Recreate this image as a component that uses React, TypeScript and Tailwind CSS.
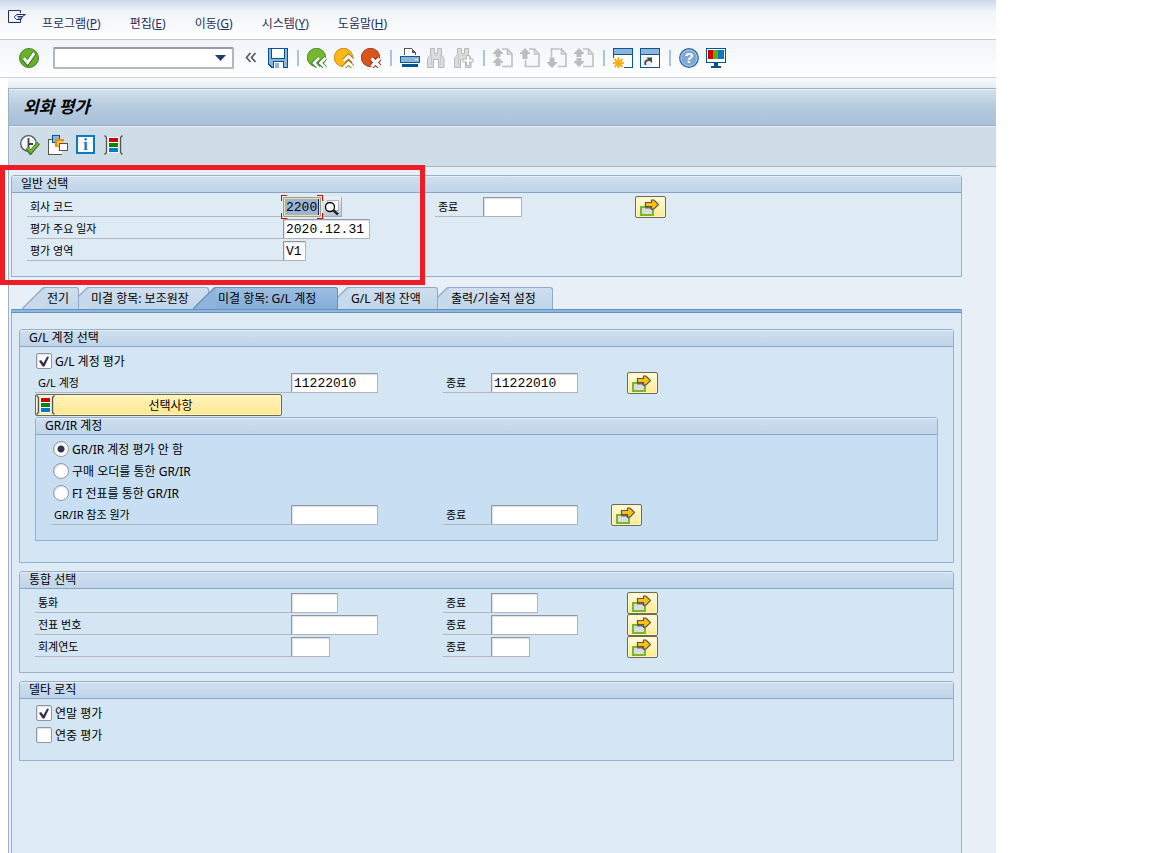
import React, { useState } from 'react';

const MENUS = [
  { label: '프로그램', hotkey: 'P' },
  { label: '편집', hotkey: 'E' },
  { label: '이동', hotkey: 'G' },
  { label: '시스템', hotkey: 'Y' },
  { label: '도움말', hotkey: 'H' },
];

const TABS = [
  { id: 'posting', label: '전기', shape: 'z-[5] w-[57px]' },
  { id: 'subledger', label: '미결 항목: 보조원장', shape: 'z-[4] -ml-[13px] w-[143px]' },
  { id: 'gl', label: '미결 항목: G/L 계정', shape: 'z-[6] -ml-[16px] w-[145px]' },
  { id: 'balance', label: 'G/L 계정 잔액', shape: 'z-[3] -ml-[12px] w-[112px]' },
  { id: 'output', label: '출력/기술적 설정', shape: 'z-[2] -ml-[12px] w-[127px]' },
];

interface IconProps {
  children: React.ReactNode;
  crisp?: boolean;
}

const Icon: React.FC<IconProps> = ({ children, crisp }) => (
  <svg
    viewBox="0 0 20 20"
    className="block h-5 w-5"
    fill="none"
    shapeRendering={crisp ? 'crispEdges' : undefined}
    aria-hidden="true"
  >
    {children}
  </svg>
);

const EnterIcon = () => (
  <Icon>
    <circle cx="10" cy="10" r="9.5" fill="#6ab023" stroke="#3f7f3a" />
    <path d="M4.5 10.5l4 4.5 7-10" stroke="#2f6f2a" strokeWidth="4.6" />
    <path d="M4.8 10.2l3.8 4.3 6.6-9.3" stroke="#fff" strokeWidth="3" />
  </Icon>
);

const SaveIcon = () => (
  <Icon crisp>
    <path d="M0 0h20v20H3l-3-3z" fill="#00558c" />
    <path d="M1 1h18v18H4l-3-3z" fill="#8fb4dc" />
    <path d="M3 0h14v11H3z" fill="#00558c" />
    <path d="M4 1h12v9H4z" fill="#fff" />
    <path d="M5 13h11v7H5z" fill="#00558c" />
    <path d="M6 14h9v6H6z" fill="#fff" />
    <path d="M7 15h4v5H7z" fill="#8fb4dc" />
  </Icon>
);

const BackIcon = () => (
  <Icon>
    <circle cx="9.5" cy="9.5" r="9.2" fill="#76b82a" stroke="#4a8b3c" />
    <path d="M12 10l-5 5 5 5M18.5 10l-5 5 5 5" stroke="#3c7f35" strokeWidth="4.4" />
    <path d="M12 10l-5 5 5 5M18.5 10l-5 5 5 5" stroke="#fff" strokeWidth="2.6" />
  </Icon>
);

const ExitIcon = () => (
  <Icon>
    <circle cx="9.5" cy="9.5" r="9.2" fill="#fdb913" stroke="#c98b20" />
    <path d="M9.5 13l5-4.5 5 4.5M9.5 19.5l5-4.5 5 4.5" stroke="#a87a2c" strokeWidth="4.8" />
    <path d="M9.5 13l5-4.5 5 4.5M9.5 19.5l5-4.5 5 4.5" stroke="#fff" strokeWidth="2.8" />
  </Icon>
);

const CancelIcon = () => (
  <Icon>
    <circle cx="9.5" cy="9.5" r="9.2" fill="#d9541a" stroke="#a83c1c" />
    <path d="M10.5 10.5l8 8M18.5 10.5l-8 8" stroke="#a02c16" strokeWidth="5.4" />
    <path d="M10.5 10.5l8 8M18.5 10.5l-8 8" stroke="#fff" strokeWidth="3.2" />
  </Icon>
);

const PrintIcon = () => (
  <Icon crisp>
    <path d="M4 7V1h9l3 3v3z" fill="#fff" />
    <path d="M4.5 7V.5H12M15.5 4v3M12 .5v3.5h4" stroke="#555" />
    <path d="M12 1h1v1h1v1h1v1h-3z" fill="#555" />
    <rect x="0" y="8" width="20" height="7" rx="1" fill="#0a5a8f" />
    <rect x="1" y="9" width="18" height="5" fill="#8fb4dc" />
    <rect x="15" y="11" width="3" height="1" fill="#fff" />
    <rect x="2" y="16" width="16" height="3" fill="#00558c" />
  </Icon>
);

const Binoculars = () => (
  <>
    <path
      d="M3.5 .5h4v5h3v-5h4v6l2.5 4v9h-5.5v-8h-5v8H.5v-9l3-4z"
      fill="#dcdcdc"
      stroke="#b8b8b8"
    />
    <path d="M4.5 6v11M13.5 6v11M7.5 7.5h3" stroke="#c8c8c8" />
  </>
);

const FindIcon = () => (
  <Icon>
    <Binoculars />
  </Icon>
);

const FindNextIcon = () => (
  <Icon>
    <Binoculars />
    <path d="M12.5 7.5h3V11H19v3h-3.5v3.5h-3V14H9v-3h3.5z" fill="#fafafa" stroke="#b8b8b8" />
  </Icon>
);

// arrow glyph over a dog-eared page, used by the four paging buttons
const PageIcon: React.FC<{ arrow: string; page: string }> = ({ arrow, page }) => (
  <Icon>
    <path d={page} fill="#f7f8fa" stroke="#c0c0c0" strokeWidth="1.6" />
    <path d="M14.5 1v5H19" stroke="#c0c0c0" strokeWidth="1.6" />
    <path d={arrow} fill="#bcbcbc" />
  </Icon>
);

const FirstPageIcon = () => (
  <PageIcon
    page="M9 1h5.5L19 6v12.5H9"
    arrow="M5 0l5 5v1H7.5v3h-5V6H0V5zM5 9l5 5v1H7.5v3h-5v-3H0v-1z"
  />
);

const PrevPageIcon = () => (
  <PageIcon page="M9 1h5.5L19 6v12.5H5.5V12" arrow="M5 0l5 5v1H7.5v5h-5V6H0V5z" />
);

const NextPageIcon = () => (
  <PageIcon page="M4.5 9V1h10L19 6v12.5h-8" arrow="M2.5 9.5h5V14H10v1l-5 5-5-5v-1h2.5z" />
);

const LastPageIcon = () => (
  <PageIcon
    page="M9 1h5.5L19 6v12.5H9"
    arrow="M5 0l5 5v1H7.5v3h-5V6H0V5zM2.5 10h5v3H10v1l-5 5-5-5v-1h2.5z"
  />
);

const WindowFrame = () => (
  <>
    <path d="M0 0h20v20H0z" fill="#0a5a8f" />
    <path d="M1 1h18v5H1z" fill="#8fb4dc" />
    <path d="M1 7h18v12H1z" fill="#fff" />
  </>
);

const NewSessionIcon = () => (
  <Icon>
    <WindowFrame />
    <path d="M0 10h11v10H0z" fill="#fff" />
    <path d="M5.5 9.5v11M0 15h11M1.5 11l8 8M9.5 11l-8 8" stroke="#f59c00" strokeWidth="1.6" />
    <circle cx="5.5" cy="15" r="3.5" fill="#fdb100" />
  </Icon>
);

const ShortcutIcon = () => (
  <Icon>
    <WindowFrame />
    <path d="M3 9h9v9H3z" fill="#ececec" />
    <path d="M5.5 17c-1-3 0-5 4-5" stroke="#444" strokeWidth="1.8" />
    <path d="M6.5 9.5H12V15z" fill="#444" />
  </Icon>
);

const HelpIcon = () => (
  <Icon>
    <circle cx="10" cy="10" r="9.3" fill="#7fa8d6" stroke="#2e6f9f" strokeWidth="1.3" />
    <circle cx="10" cy="10" r="8" stroke="#a9c6e6" />
    <text x="10" y="15" textAnchor="middle" fontFamily="Liberation Sans" fontSize="15" fontWeight="700" fill="#fff">
      ?
    </text>
  </Icon>
);

const LayoutIcon = () => (
  <Icon crisp>
    <path d="M0 0h20v15H0z" fill="#00558c" />
    <path d="M1 1h18v13H1z" fill="#fff" />
    <path d="M2 2h6v9H2z" fill="#d00000" />
    <path d="M7 2h6v9H7z" fill="#5fae00" />
    <path d="M12 2h6v9h-6z" fill="#0a78c8" />
    <path d="M8 15h4v3H8zM5 18h10v2H5z" fill="#00558c" />
  </Icon>
);

const ExecuteIcon = () => (
  <Icon>
    <circle cx="8.5" cy="8.5" r="7.8" fill="#f4f7f9" stroke="#555" strokeWidth="1.3" />
    <path d="M8.5 3v6H13M8.5 9v4" stroke="#444" strokeWidth="1.8" />
    <path d="M7 13l3.5 4.5L18.5 8" stroke="#3a6f2a" strokeWidth="4" />
    <path d="M7.5 13l3.2 3.8L18 8.5" stroke="#77b82a" strokeWidth="2.2" />
  </Icon>
);

const VariantIcon = () => (
  <Icon crisp>
    <path d="M0 4h14v16H0z" fill="#555" />
    <path d="M1 5h13v14H1z" fill="#fff" />
    <path d="M4 0h8v8H4z" fill="#0a5a8f" />
    <path d="M5 1h6v6H5z" fill="#8fb4dc" />
    <path d="M7 4h9v8H7z" fill="#f08c00" />
    <path d="M9 6h7v5H9z" fill="#fdc648" />
    <path d="M11 8h9v8h-9z" fill="#555" />
    <path d="M12 9h7v6h-7z" fill="#fff" />
  </Icon>
);

const InfoIcon = () => (
  <Icon crisp>
    <path d="M0 0h19v19H0z" fill="#0a7ac2" />
    <path d="M2 2h15v15H2z" fill="#fff" />
    <text x="9.5" y="15" textAnchor="middle" fontFamily="Liberation Serif" fontSize="16" fontWeight="700" fill="#0a7ac2">
      i
    </text>
  </Icon>
);

const SelectionIcon = () => (
  <Icon>
    <path d="M3 2h13v16H3z" fill="#f6f8fa" />
    <path d="M.5 .5l2 2v15l-2 2M18.5 .5l-2 2v15l2 2" stroke="#555" strokeWidth="1.4" />
    <path d="M5 3h9v4H5z" fill="#d00000" />
    <path d="M5 8h9v4H5z" fill="#008a00" />
    <path d="M5 13h9v4H5z" fill="#0a78c8" />
  </Icon>
);

const EXECUTION_TOOLS = [
  { label: '실행', icon: <ExecuteIcon /> },
  { label: '변형 가져오기', icon: <VariantIcon /> },
  { label: '정보', icon: <InfoIcon /> },
  { label: '동적 선택', icon: <SelectionIcon /> },
];

const ToolButton: React.FC<{ label: string; icon: React.ReactNode; disabled?: boolean }> = ({
  label,
  icon,
  disabled,
}) => (
  <button type="button" aria-label={label} disabled={disabled} className="h-5 w-5 shrink-0">
    {icon}
  </button>
);

const Separator = () => (
  <span className="flex h-5 w-[5px] shrink-0 justify-center">
    <span className="h-4 w-[2px] self-center bg-[#a9c3dd]" />
  </span>
);

const Group: React.FC<{ title: string; className: string; children: React.ReactNode }> = ({
  title,
  className,
  children,
}) => (
  <section className={`rounded-t-[3px] border border-[#93b1cf] ${className}`}>
    <h2 className="h-[17px] rounded-t-[2px] border-b border-[#8aa6c6] bg-linear-to-b from-[#cfdfee] to-[#bfd5ea] pl-[9px] text-xs leading-[15px] shadow-[inset_0_1px_0_#e3eef8]">
      {title}
    </h2>
    <div className="px-[15px] pt-[3px]">{children}</div>
  </section>
);

const FIELD =
  'h-5 rounded-[1px] border border-[#b0b4ba] border-t-[#92979e] border-l-[#92979e] bg-white px-[2px] font-["Liberation_Mono","Noto_Sans_CJK_KR",monospace] text-[13px] leading-[18px] shadow-[inset_1px_1px_1px_#dcdfe6] outline-none';

const MultiSelectButton: React.FC<{ label: string }> = ({ label }) => (
  <button
    type="button"
    aria-label={`${label} 다중 선택`}
    className="h-[22px] w-[31px] rounded-[2px] border border-[#6d6a58] bg-linear-to-b from-[#fffbe0] to-[#ffe98c] shadow-[inset_0_0_0_1px_#fff6c4]"
  >
    <svg viewBox="0 0 29 20" className="block h-5 w-[29px]" fill="none" aria-hidden="true">
      <rect x="5" y="10" width="12" height="8" fill="#dcdcdc" stroke="#76b82a" strokeWidth="2" />
      <path d="M9 9h8v5l-3-2.5H9z" fill="#6a6a6a" />
      <path d="M9.5 5.5h6V3H18l4.5 4.5L18 12h-2.5V9.500h-6z" fill="#fdc010" stroke="#555" strokeWidth="1.2" />
    </svg>
  </button>
);

interface RangeRowProps {
  label: string;
  id: string;
  columns: string;
  fieldWidth: string;
  value?: string;
  field?: React.ReactNode;
}

const RangeRow: React.FC<RangeRowProps> = ({ label, id, columns, fieldWidth, value, field }) => (
  <div className={`grid h-[22px] items-center ${columns}`}>
    <label htmlFor={id} className="h-5 border-b border-[#b4b8bc] pl-[3px] text-[11px] leading-5">
      {label}
    </label>
    <div className="flex">
      {field ?? <input id={id} defaultValue={value} className={`${FIELD} ${fieldWidth}`} />}
    </div>
    <label htmlFor={`${id}-to`} className="h-5 border-b border-[#b4b8bc] pl-[3px] text-[11px] leading-5">
      종료
    </label>
    <div className="flex">
      <input id={`${id}-to`} defaultValue={value} className={`${FIELD} ${fieldWidth}`} />
    </div>
    <MultiSelectButton label={label} />
  </div>
);

const SingleRow: React.FC<{ label: string; id: string; value: string; fieldWidth: string }> = ({
  label,
  id,
  value,
  fieldWidth,
}) => (
  <div className="flex h-[22px] items-center">
    <label htmlFor={id} className="h-5 w-64 border-b border-[#b4b8bc] pl-[3px] text-[11px] leading-5">
      {label}
    </label>
    <input id={id} defaultValue={value} className={`${FIELD} ${fieldWidth}`} />
  </div>
);

const CheckRow: React.FC<{ label: string; checked?: boolean }> = ({ label, checked }) => (
  <label className="flex h-[22px] w-fit items-center gap-[3px] pl-px text-xs leading-5">
    <span className="relative h-4 w-4">
      <input
        type="checkbox"
        defaultChecked={checked}
        className="peer block h-4 w-4 appearance-none rounded-[2px] border border-[#92979e] bg-white shadow-[inset_1px_1px_1px_#dcdfe6]"
      />
      <svg
        viewBox="0 0 16 16"
        className="pointer-events-none absolute inset-0 hidden h-4 w-4 peer-checked:block"
        aria-hidden="true"
      >
        <path d="M3 8l2-1 2.5 3L11 3.5l2 .5-4.5 9.5h-2z" fill="#32325a" />
      </svg>
    </span>
    <span className="pt-[2px]">{label}</span>
  </label>
);

const RadioRow: React.FC<{ label: string; checked?: boolean }> = ({ label, checked }) => (
  <label className="flex h-[22px] w-fit items-center gap-[3px] pl-[2px] text-xs leading-5">
    <input
      type="radio"
      name="grir"
      defaultChecked={checked}
      className="h-4 w-4 appearance-none rounded-full border border-[#92979e] bg-white shadow-[inset_1px_1px_1px_#dcdfe6] checked:bg-[radial-gradient(circle,#32324f_3px,#ffffff_4px)]"
    />
    <span className="pt-[2px]">{label}</span>
  </label>
);

// focused field: selected text, red corner marks and the F4 search button
const CompanyCodeField = () => (
  <>
    <span className="relative h-5">
      <input
        id="company"
        defaultValue="2200"
        className="h-5 w-[38px] rounded-[1px] border-2 border-[#eadf9c] bg-[#9bb4d6] px-px font-['Liberation_Mono',monospace] text-[13px] leading-4 shadow-[inset_-1px_0_0_#1b2a55] outline-1 -outline-offset-1 outline-[#a49f7c]"
      />
      <span className="absolute -top-[2px] -left-[2px] h-[6px] w-[6px] border-t border-l border-[#e00000]" />
      <span className="absolute -top-[2px] -right-[2px] h-[6px] w-[6px] border-t border-r border-[#e00000]" />
      <span className="absolute -bottom-[2px] -left-[2px] h-[6px] w-[6px] border-b border-l border-[#e00000]" />
      <span className="absolute -right-[2px] -bottom-[2px] h-[6px] w-[6px] border-r border-b border-[#e00000]" />
    </span>
    <button
      type="button"
      aria-label="회사 코드 검색"
      className="ml-[2px] flex h-5 w-[19px] items-center justify-center border-r border-b border-[#a6acb6] bg-linear-to-b from-[#eef1f6] to-[#b9c6da]"
    >
      <svg viewBox="0 0 18 18" className="h-[18px] w-[18px]" fill="none" aria-hidden="true">
        <rect x="4.5" y="2.5" width="11" height="10" fill="#fff" stroke="#b0b4ba" />
        <circle cx="7" cy="9" r="4.5" fill="#fff" stroke="#000" strokeWidth="1.3" />
        <path d="M10 12l5 4.5" stroke="#222" strokeWidth="2.4" />
      </svg>
    </button>
  </>
);

export default function App() {
  const [activeTab, setActiveTab] = useState('gl');

  return (
    <div className='relative flex min-h-screen flex-col bg-white pr-[156px] font-["Noto_Sans","Noto_Sans_CJK_KR",sans-serif] text-xs text-black'>
      <nav className="flex h-10 items-start border-b border-[#c6cacf] bg-linear-to-b from-[#cad7ea] via-[#f1f4f9] via-30% to-white pl-2 text-[#1d2f5c]">
        <svg viewBox="0 0 18 13" className="mt-[10px] h-[13px] w-[18px]" fill="none" stroke="#1c2f6b" aria-hidden="true">
          <path d="M12.5 3V.5H.5v12h12V10" />
          <path d="M17.5 4.500H9L6.500 6.500v1L8.500 9.500H13l1-2 1-1.500 2.500-1.500M9.500 6.500H14M10 8h4" />
        </svg>
        <div className="flex gap-[29px] pt-[14px] pl-4 leading-5">
          {MENUS.map((menu) => (
            <button key={menu.hotkey} type="button">
              {menu.label}(<u>{menu.hotkey}</u>)
            </button>
          ))}
        </div>
      </nav>

      <div className="flex h-[38px] items-center gap-[7px] border-b border-[#ccd0d5] bg-linear-to-b from-[#f0f4f8] to-white pb-px pl-[19px]">
        <ToolButton label="엔터" icon={<EnterIcon />} />
        <div className="relative ml-[7px]">
          <select
            aria-label="명령 필드"
            className="block h-[22px] w-[181px] appearance-none rounded-[2px] border-2 border-[#b4b7bb] border-t-[#989ca1] bg-white px-1 outline-none"
          >
            <option></option>
          </select>
          <svg viewBox="0 0 11 6" className="pointer-events-none absolute top-2 right-2 h-[6px] w-[11px]" aria-hidden="true">
            <path d="M0 0h11L5.5 6z" fill="#22386f" />
          </svg>
        </div>
        <button type="button" aria-label="명령 필드 숨기기" className="mx-1 h-5 w-3">
          <svg viewBox="0 0 12 20" className="h-5 w-3" fill="none" aria-hidden="true">
            <path d="M5.5 5l-4 4.5 4 4.5M10.5 5l-4 4.5 4 4.5" stroke="#5a5a5a" strokeWidth="1.7" />
          </svg>
        </button>
        <ToolButton label="저장" icon={<SaveIcon />} />
        <Separator />
        <ToolButton label="뒤로" icon={<BackIcon />} />
        <ToolButton label="종료" icon={<ExitIcon />} />
        <ToolButton label="취소" icon={<CancelIcon />} />
        <Separator />
        <ToolButton label="인쇄" icon={<PrintIcon />} />
        <ToolButton label="찾기" icon={<FindIcon />} disabled />
        <ToolButton label="계속 찾기" icon={<FindNextIcon />} disabled />
        <Separator />
        <ToolButton label="첫 페이지" icon={<FirstPageIcon />} disabled />
        <ToolButton label="이전 페이지" icon={<PrevPageIcon />} disabled />
        <ToolButton label="다음 페이지" icon={<NextPageIcon />} disabled />
        <ToolButton label="마지막 페이지" icon={<LastPageIcon />} disabled />
        <Separator />
        <ToolButton label="새 세션" icon={<NewSessionIcon />} />
        <ToolButton label="바로가기 생성" icon={<ShortcutIcon />} />
        <Separator />
        <ToolButton label="도움말" icon={<HelpIcon />} />
        <ToolButton label="로컬 레이아웃" icon={<LayoutIcon />} />
      </div>

      <div className="ml-2 h-[10px] bg-linear-to-b from-[#f8fafc] to-[#e4ebf3]" />

      <main className="ml-2 flex flex-1 flex-col border-t border-l border-[#9fb1c6] bg-[#e8eff6]">
        <header className="flex h-[37px] items-center border-b border-[#9db0c8] bg-linear-to-b from-[#d3e1ec] via-[#b5cade] to-[#a9c0da] pl-[14px] shadow-[inset_0_1px_0_#e8f0f7]">
          <h1 className="text-[17px] leading-6 font-bold italic">외화 평가</h1>
        </header>
        <div className="flex h-[41px] items-center gap-2 border-b border-[#a3b8cc] bg-[#cfdde8] pb-[2px] pl-[11px] shadow-[inset_0_1px_0_#e6eef5]">
          {EXECUTION_TOOLS.map((tool) => (
            <ToolButton key={tool.label} label={tool.label} icon={tool.icon} />
          ))}
        </div>

        <div className="flex flex-1 flex-col pt-2 pr-[34px] pl-[2px]">
          <Group title="일반 선택" className="bg-[#deebf4] pb-[14px]">
            <RangeRow
              label="회사 코드"
              id="company"
              columns="grid-cols-[256px_152px_48px_152px_31px]"
              fieldWidth="w-[39px]"
              field={<CompanyCodeField />}
            />
            <SingleRow label="평가 주요 일자" id="key-date" value="2020.12.31" fieldWidth="w-[87px]" />
            <SingleRow label="평가 영역" id="area" value="V1" fieldWidth="w-[23px]" />
          </Group>

          <div role="tablist" className="mt-[10px] flex h-[22px] pl-[11px]">
            {TABS.map((tab) => {
              const active = tab.id === activeTab;
              return (
                <button
                  key={tab.id}
                  type="button"
                  role="tab"
                  aria-selected={active}
                  onClick={() => setActiveTab(tab.id)}
                  className={`relative flex h-[22px] ${tab.shape}`}
                >
                  <svg viewBox="0 0 23 22" className="h-[22px] w-[23px] shrink-0" aria-hidden="true">
                    <path d="M0 22L20 2Q21.5 .5 23 .5V22z" fill={active ? '#8fb3db' : '#c6daec'} />
                    <path d="M0 22L20 2Q21.5 .5 23 .5" fill="none" stroke={active ? '#6690bd' : '#8faac8'} strokeWidth="1.3" />
                  </svg>
                  <span
                    className={`h-[22px] flex-1 rounded-tr-[3px] border-t border-r pl-[2px] text-left leading-[22px] whitespace-nowrap ${
                      active
                        ? 'border-[#6690bd] bg-linear-to-b from-[#9bbde0] to-[#86acd8]'
                        : 'border-[#8faac8] bg-linear-to-b from-[#cfdfee] to-[#bfd5ea]'
                    }`}
                  >
                    {tab.label}
                  </span>
                </button>
              );
            })}
          </div>

          <div
            role="tabpanel"
            className="flex flex-1 flex-col gap-2 border-x border-x-[#93b1cf] bg-[#deebf5] px-[7px] pb-4"
          >
            <div className="-mx-[8px] mb-2 h-1 rounded-t-[2px] border-y border-[#6690bd] bg-[#8fb8de]" />
            <Group title="G/L 계정 선택" className="bg-[#d4e6f4] pb-[21px]">
              <CheckRow label="G/L 계정 평가" checked />
              <RangeRow
                label="G/L 계정"
                id="gl-account"
                columns="grid-cols-[256px_152px_48px_136px_31px]"
                fieldWidth="w-[87px]"
                value="11222010"
              />
              <button
                type="button"
                className="mb-px flex h-[22px] w-[247px] items-center rounded-[2px] border border-[#6d6a58] bg-linear-to-b from-[#fff3bd] to-[#ffe790] shadow-[inset_0_0_0_1px_#fff6c4]"
              >
                <SelectionIcon />
                <span className="flex-1 pt-px pl-1 text-center leading-5">선택사항</span>
              </button>
              <Group title="GR/IR 계정" className="bg-[#c8dff3] pb-[14px]">
                <RadioRow label="GR/IR 계정 평가 안 함" checked />
                <RadioRow label="구매 오더를 통한 GR/IR" />
                <RadioRow label="FI 전표를 통한 GR/IR" />
                <RangeRow
                  label="GR/IR 참조 원가"
                  id="grir-cost"
                  columns="grid-cols-[240px_152px_48px_120px_31px]"
                  fieldWidth="w-[87px]"
                />
              </Group>
            </Group>

            <Group title="통합 선택" className="bg-[#d4e6f4] pb-[14px]">
              <RangeRow
                label="통화"
                id="currency"
                columns="grid-cols-[256px_152px_48px_136px_31px]"
                fieldWidth="w-[47px]"
              />
              <RangeRow
                label="전표 번호"
                id="document"
                columns="grid-cols-[256px_152px_48px_136px_31px]"
                fieldWidth="w-[87px]"
              />
              <RangeRow
                label="회계연도"
                id="fiscal-year"
                columns="grid-cols-[256px_152px_48px_136px_31px]"
                fieldWidth="w-[39px]"
              />
            </Group>

            <Group title="델타 로직" className="bg-[#d4e6f4] pb-[14px]">
              <CheckRow label="연말 평가" checked />
              <CheckRow label="연중 평가" />
            </Group>
          </div>
        </div>
      </main>

      {/* red marker box around the general selection */}
      <div className="pointer-events-none absolute top-[165px] left-0 z-10 h-[120px] w-[425px] border-[5px] border-[#ee1c24]" />
    </div>
  );
}
